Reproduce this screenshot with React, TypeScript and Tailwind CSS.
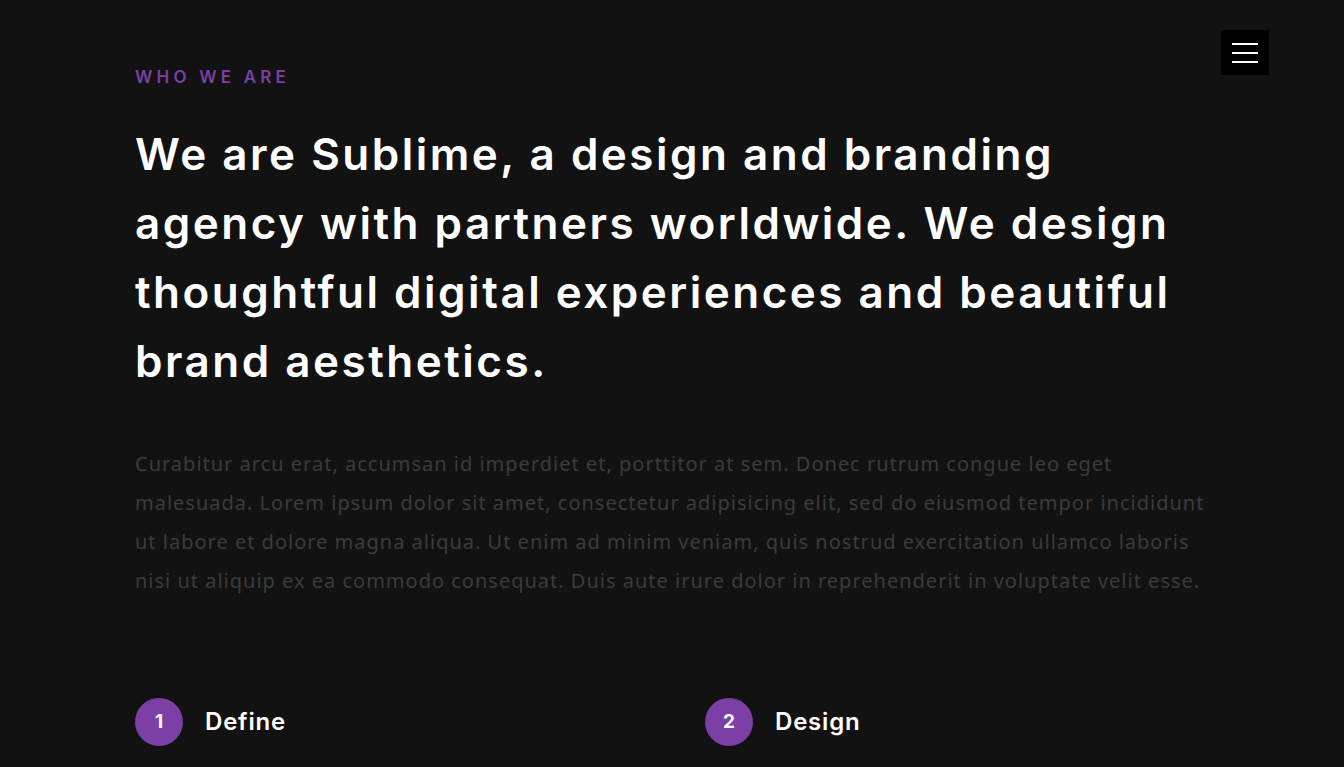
const steps = [
  { n: 1, title: 'Define' },
  { n: 2, title: 'Design' },
];

function MenuButton() {
  return (
    <button className="absolute right-[75px] top-[30px] flex h-[45px] w-[48px] flex-col items-center justify-center gap-[7px] bg-black">
      <span className="block h-[2px] w-[26px] bg-white" />
      <span className="block h-[2px] w-[26px] bg-white" />
      <span className="block h-[2px] w-[26px] bg-white" />
    </button>
  );
}

export default function App() {
  return (
    <div className="relative min-h-[767px] overflow-hidden bg-[#121212]">
      <MenuButton />
      <section className="pl-[135px] pr-[100px] pt-[66px]">
        <p className="font-['Inter',sans-serif] text-[17px] font-semibold uppercase leading-[22px] tracking-[4.2px] text-[#7b3fa6]">
          Who we are
        </p>
        <h2 className="mt-[32px] whitespace-nowrap font-['Inter',sans-serif] text-[44px] font-semibold leading-[69px] tracking-[2.5px] text-white">
          We are Sublime, a design and branding
          <br />
          agency with partners worldwide. We design
          <br />
          thoughtful digital experiences and beautiful
          <br />
          brand aesthetics.
        </h2>
        <p className="mt-[48px] whitespace-nowrap font-['Noto_Sans',sans-serif] text-[20px] leading-[39px] tracking-[1px] text-[#3c3c3c]">
          Curabitur arcu erat, accumsan id imperdiet et, porttitor at sem. Donec rutrum congue leo eget
          <br />
          malesuada. Lorem ipsum dolor sit amet, consectetur adipisicing elit, sed do eiusmod tempor incididunt
          <br />
          ut labore et dolore magna aliqua. Ut enim ad minim veniam, quis nostrud exercitation ullamco laboris
          <br />
          nisi ut aliquip ex ea commodo consequat. Duis aute irure dolor in reprehenderit in voluptate velit esse.
        </p>
        <div className="mt-[98px] grid w-[1140px] grid-cols-2">
          {steps.map((s) => (
            <div key={s.n} className="flex items-center gap-[22px]">
              <span className="flex h-[48px] w-[48px] items-center justify-center rounded-full bg-[#7b3fa6] font-['Inter',sans-serif] text-[19px] font-bold text-white">
                {s.n}
              </span>
              <h3 className="font-['Inter',sans-serif] text-[24px] font-semibold tracking-[0.8px] text-white">{s.title}</h3>
            </div>
          ))}
        </div>
      </section>
    </div>
  );
}
